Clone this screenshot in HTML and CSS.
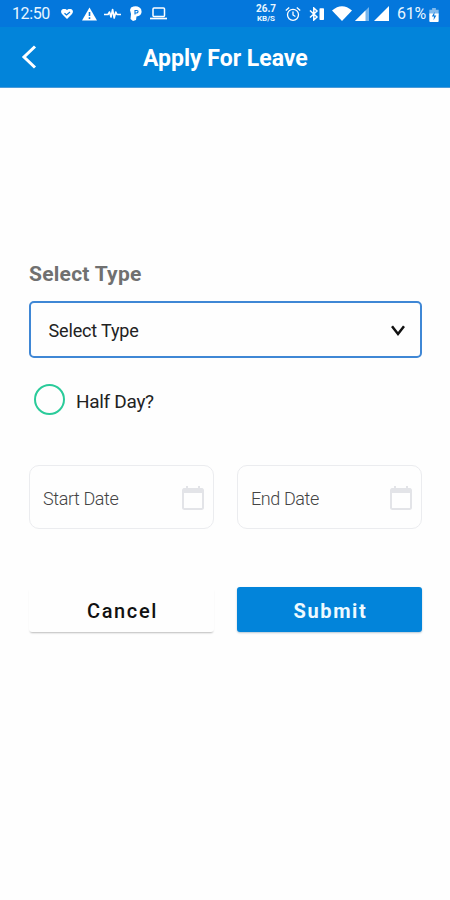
FILE: index.html
```html
<!DOCTYPE html>
<html lang="en">
<head>
<meta charset="utf-8">
<title>Apply For Leave</title>
<link rel="stylesheet" href="styles.css">
</head>
<body>
<div class="status">
  <span class="time">12:50</span>
  <svg class="heart" width="12" height="10" viewBox="0 0 12 10"><path d="M6 10L1 5C-2 1 3-2 6 1C9-2 14 1 11 5Z" fill="#fff"/><path d="M3.5 4.2L5.5 6L9 3" fill="none" stroke="#0477dc" stroke-width="1.2"/></svg>
  <svg class="warn" width="15" height="14" viewBox="0 0 15 14"><path d="M7.5.5L15 13.5H0Z" fill="#fff"/><path d="M7.5 5V9M7.5 10.2V12" stroke="#0477dc" stroke-width="1.6"/></svg>
  <svg class="pulse" width="17" height="12" viewBox="0 0 17 12"><path d="M0 6.5H4L5.5 4L7 9L8.6 1.5L10.2 10L11.8 4L13 6.5H17" fill="none" stroke="#fff" stroke-width="1.6" stroke-linejoin="round"/></svg>
  <svg class="pay" width="12" height="15" viewBox="0 0 12 15"><path d="M1 1.5Q6-1 9.5 1.5Q12 3 11.5 6.5Q11 10 6.5 10.5L6 14L3 15L.5 13L1 8L0 4Z" fill="#fff"/><path d="M5 8.5V4.5H6.8Q8.2 4.5 8 5.8Q7.8 7.2 5.6 7" fill="none" stroke="#0477dc" stroke-width="1.1"/></svg>
  <svg class="laptop" width="17" height="13" viewBox="0 0 17 13"><rect x="3" y="1" width="11.5" height="8.5" rx="1" fill="none" stroke="#fff" stroke-width="1.5"/><path d="M0 11.5H17" stroke="#fff" stroke-width="1.7"/></svg>
  <span class="speed"><b>26.7</b><small>KB/S</small></span>
  <svg class="alarm" width="16" height="16" viewBox="0 0 16 16"><g fill="none" stroke="#fff" stroke-width="1.3"><circle cx="8" cy="8.8" r="5.5"/><path d="M.8 4.4L4.2 1.4M15.2 4.4L11.8 1.4M8 5.5V9L10.4 10.5"/></g></svg>
  <svg class="bt" width="15" height="14" viewBox="0 0 15 14"><path d="M1 3.5L8 10L4.8 13V1L8 4L1 10.5" fill="none" stroke="#fff" stroke-width="1.5"/><rect x="10.5" y="1.3" width="4.5" height="11.7" rx=".8" fill="#fff"/></svg>
  <svg class="wifi" width="20" height="15" viewBox="0 0 20 15"><path d="M0 4.5Q10-4 20 4.5L10 15Z" fill="#fff"/></svg>
  <svg class="signal" width="14" height="14" viewBox="0 0 14 14"><path d="M0 14L14 0V14Z" fill="#fff" opacity=".45"/><path d="M0 14L10.5 3.5V14Z" fill="#fff"/></svg>
  <svg class="signal-full" width="15" height="15" viewBox="0 0 15 15"><path d="M0 15L15 0V15Z" fill="#fff"/></svg>
  <span class="percent">61%</span>
  <svg class="battery" width="10" height="14" viewBox="0 0 10 15"><path d="M3 0H7V2H10V7H0V2H3Z" fill="#fff" opacity=".5"/><path d="M0 6H10V14Q10 15 9 15H1Q0 15 0 14Z" fill="#fff"/><path d="M5.7 4L2.7 9H5L4.5 13L7.5 8H5.2Z" fill="#0477dc"/></svg>
</div>
<header class="bar">
  <svg class="back" width="16" height="26" viewBox="0 0 16 26"><path d="M14 2.5L3 13L14 23.5" fill="none" stroke="#fff" stroke-width="3"/></svg>
  <h1>Apply For Leave</h1>
</header>
<main>
  <div class="label">Select Type</div>
  <div class="select"><span>Select Type</span>
    <svg width="14" height="12" viewBox="0 0 14 12"><path d="M1 1.2L7 9L13 1.2" fill="none" stroke="#111" stroke-width="2.5"/></svg>
  </div>
  <div class="half"><i></i><span>Half Day?</span></div>
  <div class="pair dates">
    <div class="date"><span>Start Date</span><svg width="22" height="25" viewBox="0 0 22 25"><path d="M5 0V4M17 0V4" stroke="#e3e4e8" stroke-width="2"/><rect x="1" y="3" width="20" height="20" rx="1.5" fill="none" stroke="#e3e4e8" stroke-width="2"/><path d="M1 2.5H21V7H1Z" fill="#e3e4e8"/></svg></div>
    <div class="date"><span>End Date</span><svg width="22" height="25" viewBox="0 0 22 25"><path d="M5 0V4M17 0V4" stroke="#e3e4e8" stroke-width="2"/><rect x="1" y="3" width="20" height="20" rx="1.5" fill="none" stroke="#e3e4e8" stroke-width="2"/><path d="M1 2.5H21V7H1Z" fill="#e3e4e8"/></svg></div>
  </div>
  <div class="pair actions">
    <div class="btn cancel">Cancel</div>
    <div class="btn submit">Submit</div>
  </div>
</main>
</body>
</html>
```
FILE: styles.css
```css
* { box-sizing: border-box; }
body { margin: 0; width: 450px; height: 900px; overflow: hidden; background: #fefefe; font-family: Roboto, sans-serif; color: #222; }
svg { display: block; flex: none; }
.status { display: flex; align-items: center; height: 27px; padding-left: 12px; background: #0477dc; color: #e8f6ff; font-size: 16px; white-space: nowrap; }
.time { width: 38px; line-height: 28px; letter-spacing: -.4px; }
.heart { margin-left: 11px; }
.warn { margin-left: 9px; }
.pulse { margin-left: 7px; }
.pay { margin-left: 9px; }
.laptop { margin-left: 8px; }
.speed { width: 22px; margin-left: 88px; text-align: center; }
.speed b, .speed small { display: block; font-weight: 700; }
.speed b { font-size: 10px; line-height: 10px; }
.speed small { margin-top: 1px; font-size: 8px; line-height: 8px; }
.alarm { margin-left: 8px; }
.bt { margin-left: 8px; }
.wifi { margin-left: 8px; }
.signal { margin-left: 3px; }
.signal-full { margin-left: 5px; }
.percent { width: 30px; margin-left: 8px; line-height: 28px; letter-spacing: -.2px; }
.battery { margin-left: 2px; margin-top: 2px; }
.bar { display: flex; align-items: center; height: 61px; padding-left: 21px; background: #0284da; border-bottom: 1px solid #4b9bd9; color: #fff; }
.back { margin-right: 106px; }
h1 { margin: 4px 0 0; font-size: 23px; line-height: 30px; font-weight: 700; letter-spacing: 0; white-space: nowrap; }
main { padding: 172px 28px 0 29px; }
.label { height: 28px; font-size: 21px; line-height: 28px; font-weight: 700; color: #707070; letter-spacing: .25px; }
.select { display: flex; align-items: center; justify-content: space-between; height: 57px; margin-top: 13px; padding: 2px 15px 0 17.5px; border: 2px solid #3f87d5; border-radius: 5px; font-size: 18px; letter-spacing: -.15px; }
.half { display: flex; align-items: center; height: 32px; margin: 25px 0 0 5px; font-size: 19px; letter-spacing: -.3px; }
.half i { width: 31px; height: 31px; border: 2px solid #2acb9a; border-radius: 50%; margin-right: 11px; }
.half span { margin-top: 5px; }
.pair { display: grid; grid-template-columns: 185px 185px; gap: 23px; }
.dates { margin-top: 50px; }
.date { display: flex; align-items: center; justify-content: space-between; height: 64px; padding: 2px 9px 0 12px; border: 1.5px solid #ebecef; border-radius: 10px; font-size: 18px; font-weight: 300; color: #444; letter-spacing: -.4px; }
.date { padding-left: 13px; }
.actions { margin-top: 58px; }
.btn { height: 45px; line-height: 48px; padding-left: 2px; border-radius: 3px; text-align: center; font-size: 20px; font-weight: 500; letter-spacing: 1.6px; }
.cancel { box-shadow: 0 2px 2px -1px #bbb; color: #111; background: #fefefe; }
.submit { background: #0284da; color: #eefaff; font-weight: 700; box-shadow: 0 1px 2px #b6c6d2; }
```
